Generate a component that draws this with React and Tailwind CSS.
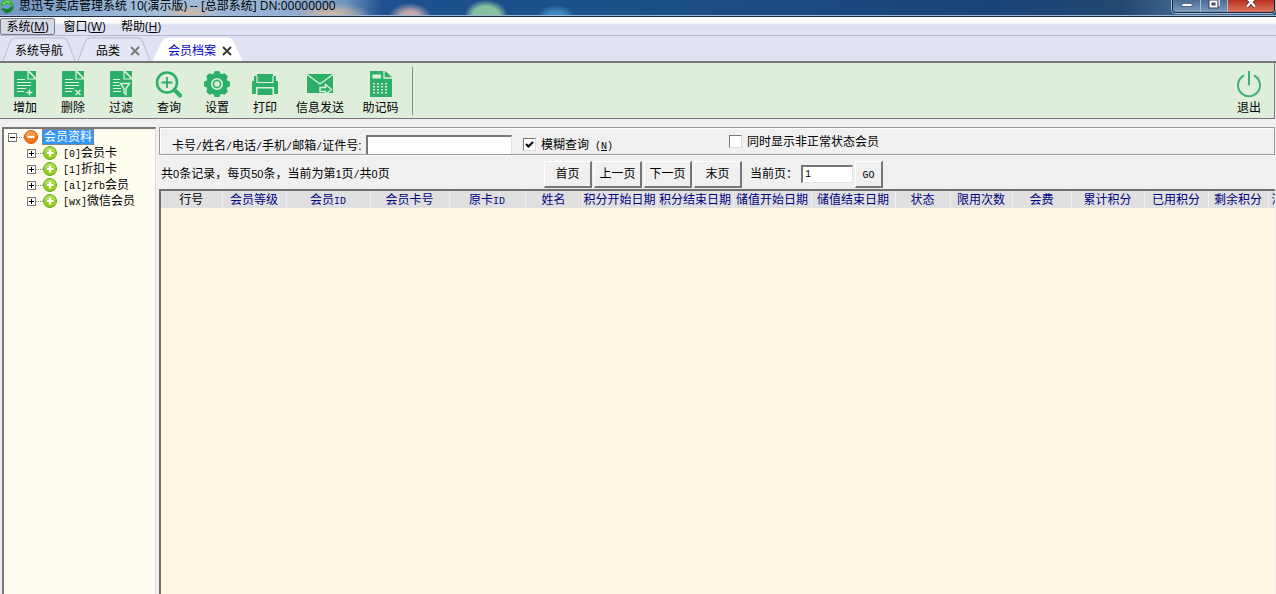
import React from "react";

const ui = "font-['Liberation_Sans','Noto_Sans_CJK_SC',sans-serif]";

function Mono({ children }) {
  return <span className="font-['Liberation_Mono',monospace] text-[10px] leading-none">{children}</span>;
}

function Num({ children }) {
  return <span className="text-[11px] leading-none">{children}</span>;
}

const G = "#2cb069";
const L = "#dff0d8";

function Sheet({ children }) {
  return (
    <svg width="28" height="28" viewBox="0 0 28 28" fill="none" aria-hidden="true">
      <path d="M3 1h14l8 8v18H3z" fill={G} />
      <path d="M18.500 1H25v6.500z" fill={G} />
      <path d="M17 1l8 8M17 1v8h8" stroke={L} strokeWidth="1.200" />
      {children}
    </svg>
  );
}

const icons = {
  add: (
    <Sheet>
      <path d="M6 9.500h8M6 12.500h14M6 15.500h14M6 18.500h9M6 21.500h7" stroke={L} strokeWidth="1.200" />
      <path d="M18.500 19.500v6M15.500 22.500h6" stroke={L} strokeWidth="1.400" />
    </Sheet>
  ),
  remove: (
    <Sheet>
      <path d="M6 9.500h8M6 12.500h14M6 15.500h14M6 18.500h9M6 21.500h7" stroke={L} strokeWidth="1.200" />
      <path d="M16.500 20l5 5M21.500 20l-5 5" stroke={L} strokeWidth="1.400" />
    </Sheet>
  ),
  filter: (
    <Sheet>
      <path d="M6 9.500h7M6 12.500h6M6 15.500h7M6 18.500h8M6 21.500h8" stroke={L} strokeWidth="1.200" />
      <path d="M13.500 13.500h9l-3.500 5v6l-2-1.500v-4.500z" fill={G} stroke={L} strokeWidth="1.400" />
    </Sheet>
  ),
  search: (
    <svg width="28" height="28" viewBox="0 0 28 28" fill="none" stroke={G} aria-hidden="true">
      <circle cx="12" cy="12.500" r="10" strokeWidth="2.600" />
      <path d="M12 7v11M6.500 12.500h11" strokeWidth="1.800" />
      <path d="M19.500 20l5.500 5.500" strokeWidth="4" strokeLinecap="round" />
    </svg>
  ),
  gear: (
    <svg width="28" height="28" viewBox="0 0 28 28" fill={G} aria-hidden="true">
      <circle cx="14" cy="14" r="11" />
      {[0, 45, 90, 135].map((a) => (
        <rect key={a} x="11" y="1" width="6" height="26" rx="1.500" transform={`rotate(${a} 14 14)`} />
      ))}
      <circle cx="14" cy="14" r="5.200" stroke={L} strokeWidth="1.600" />
      <circle cx="14" cy="14" r="2.800" fill={L} />
    </svg>
  ),
  print: (
    <svg width="28" height="28" viewBox="0 0 28 28" fill={G} aria-hidden="true">
      <path d="M6 4h16v7h4a1 1 0 0 1 1 1v12h-4v-6H5v6H1V12a1 1 0 0 1 1-1h4z" />
      <path d="M6.500 18.500h15V25h-15z" />
      <path d="M3 7.500h1.500V13h19V7.500H25" fill="none" stroke={G} strokeWidth="3" />
      <path d="M6 6v6.500h16V6" fill="none" stroke={L} strokeWidth="1.200" />
      <path d="M5.500 24v-6.500h17V24" fill="none" stroke={L} strokeWidth="1.200" />
    </svg>
  ),
  mail: (
    <svg width="28" height="28" viewBox="0 0 28 28" aria-hidden="true">
      <path d="M1 4h26v19H1z" fill={G} />
      <path d="M1 4.500l13 9.500 13-9.500" fill="none" stroke={L} strokeWidth="1.400" />
      <path d="M14 17.500h5.500v-3l6 5-6 5v-3H14z" fill={G} stroke={L} strokeWidth="1.400" />
    </svg>
  ),
  calc: (
    <svg width="28" height="28" viewBox="0 0 28 28" aria-hidden="true">
      <path d="M3 1h15l7 6v20H3z" fill={G} />
      <path d="M5.500 4.500h8.500v4H5.500z" fill={L} />
      <path d="M17 1v7h8" fill="none" stroke={L} strokeWidth="1.300" />
      {[13, 16, 19, 22].map((y) =>
        [6, 10, 14, 18].map((x) => <rect key={`${x}-${y}`} x={x} y={y} width="2" height="1.500" fill={L} />)
      )}
    </svg>
  ),
};

const tools = [
  ["add", "增加", "w-12"],
  ["remove", "删除", "w-12"],
  ["filter", "过滤", "w-12"],
  ["search", "查询", "w-12"],
  ["gear", "设置", "w-12"],
  ["print", "打印", "w-12"],
  ["mail", "信息发送", "w-[62px]"],
  ["calc", "助记码", "w-[59px]"],
];

function Tool({ icon, label, width }) {
  return (
    <button type="button" className={`${width} flex flex-col items-center text-xs leading-4 text-black`}>
      {icon}
      <span className="pt-0.5 whitespace-nowrap">{label}</span>
    </button>
  );
}

function Tab({ label, active, closable, className }) {
  return (
    <button type="button" role="tab" aria-selected={!!active} className={`relative flex h-6 items-center pt-1 ${className}`}>
      <svg className="absolute inset-0 h-full w-full" viewBox="0 0 80 24" preserveAspectRatio="none" aria-hidden="true">
        <path
          d="M0 24L8 5Q10 1 14 1H67Q71 1 72 5L80 24"
          fill={active ? "#fff" : "#e3e6f5"}
          stroke={active ? "#fff" : "#b9bccb"}
          vectorEffect="non-scaling-stroke"
        />
      </svg>
      <span className={`relative ${active ? "text-[#0000c0]" : "text-black"}`}>{label}</span>
      {closable && (
        <svg className="relative" width="10" height="10" viewBox="0 0 10 10" aria-hidden="true">
          <path d="M1 1l8 8M9 1l-8 8" stroke={active ? "#333" : "#777"} strokeWidth="1.800" />
        </svg>
      )}
    </button>
  );
}

function Expander({ open }) {
  return (
    <svg width="9" height="9" viewBox="0 0 9 9" shapeRendering="crispEdges" aria-hidden="true">
      <path d="M.5.5h8v8h-8z" fill="#fff" stroke="#777" />
      <path d={open ? "M2 4.500h5" : "M2 4.500h5M4.500 2v5"} stroke="#000" />
    </svg>
  );
}

function Ball({ minus }) {
  return (
    <svg width="14" height="14" viewBox="0 0 14 14" aria-hidden="true">
      <circle cx="7" cy="7" r="6.500" fill={minus ? "#f07818" : "#8fd01c"} stroke={minus ? "#cf5a10" : "#68ad14"} />
      <path d="M1.500 6a5.500 5 0 0 1 11 0q-5.500 2-11 0" fill="#fff" opacity=".25" />
      <path d={minus ? "M3.500 7h7" : "M3.500 7h7M7 3.500v7"} stroke="#fff" strokeWidth="2.200" />
    </svg>
  );
}

function Check({ label, checked, className }) {
  return (
    <label className={`flex items-center gap-[5px] whitespace-nowrap ${className}`}>
      <span className="grid">
        <input
          type="checkbox"
          defaultChecked={checked}
          className="peer col-start-1 row-start-1 size-[13px] appearance-none border border-t-[#777] border-r-[#ddd] border-b-[#ddd] border-l-[#777] bg-white"
        />
        <svg className="pointer-events-none invisible col-start-1 row-start-1 peer-checked:visible" width="13" height="13" viewBox="0 0 13 13" aria-hidden="true">
          <path d="M3 6l2.500 2.500L10 4" fill="none" stroke="#000" strokeWidth="2.200" />
        </svg>
      </span>
      <span className="pt-px leading-4">{label}</span>
    </label>
  );
}

function Raised({ children, className }) {
  return (
    <button
      type="button"
      className={`h-[27px] border-t border-r-2 border-b-2 border-l border-t-white border-r-[#777] border-b-[#777] border-l-white bg-[#f0f0f0] text-center ${className}`}
    >
      {children}
    </button>
  );
}

const sunken = "border-t-2 border-l-2 border-r border-b border-t-[#777] border-l-[#777] border-r-[#e3e3e3] border-b-[#e3e3e3] bg-white";

const nodes = [
  ["[0]", "会员卡"],
  ["[1]", "折扣卡"],
  ["[al]zfb", "会员"],
  ["[wx]", "微信会员"],
];

const columns = [
  ["行号", 61],
  ["会员等级", 64],
  [<>会员<Mono>ID</Mono></>, 84],
  ["会员卡号", 79],
  [<>原卡<Mono>ID</Mono></>, 76],
  ["姓名", 57],
  ["积分开始日期", 75],
  ["积分结束日期", 76],
  ["储值开始日期", 78],
  ["储值结束日期", 84],
  ["状态", 55],
  ["限用次数", 62],
  ["会费", 59],
  ["累计积分", 73],
  ["已用积分", 64],
  ["剩余积分", 60],
  ["消费次数", 55],
];

export default function App() {
  return (
    <div className={`flex min-h-screen flex-col overflow-hidden bg-[#f0f0f0] text-xs text-black ${ui}`}>
      <header className="flex h-[17px] items-start justify-between border-b border-[#182a48] bg-[linear-gradient(0deg,#9fb6d4_0px,#9fb6d4_1px,transparent_1px),radial-gradient(ellipse_22px_14px_at_410px_17px,#c5a9ad_40%,transparent),radial-gradient(ellipse_22px_16px_at_486px_16px,#86c2a0_60%,transparent),radial-gradient(ellipse_20px_12px_at_556px_17px,#3f8cc6_40%,transparent),radial-gradient(ellipse_40px_14px_at_332px_16px,#d0b8a4_20%,transparent),radial-gradient(ellipse_30px_12px_at_190px_16px,#d0b8a4_20%,transparent),linear-gradient(90deg,#6f97c4_0%,#a4bedb_12%,#94b0d2_22%,#6f95c0_27%,#1d508f_30%,#1b5088_50%,#184478_78%,#244872_88%,#456a92_93%,#345b84_100%)]">
        <div className="flex items-start gap-1">
          <svg width="15" height="14" viewBox="0 0 15 14" aria-hidden="true">
            <path d="M0 5Q4-3 10 0l4 5-3 1Q8 2 4 5L3 7z" fill="#35b53f" />
            <path d="M14 6Q13 13 6 13.500L1 9l3-1q4 3 6-1z" fill="#15802a" />
            <path d="M3 4Q6 0 10 2" fill="none" stroke="#a5e89b" strokeWidth="1" />
          </svg>
          <h1 className="text-xs leading-3 font-normal whitespace-nowrap font-[family-name:'Open_Sans','Noto_Sans_CJK_SC',sans-serif]">
            思迅专卖店管理系统 10(演示版) -- [总部系统] DN:00000000
          </h1>
        </div>
        <div className="mr-px flex h-[13px] overflow-hidden rounded-b border border-t-0 border-[#17273d] shadow-[0_0_0_1px_#a9bed6]">
          <button type="button" aria-label="最小化" className="flex w-7 justify-center border-r border-[#a9bed6] bg-linear-to-b from-[#4a6d94] to-[#7e9bbb]">
            <svg width="14" height="12" viewBox="0 0 14 12" aria-hidden="true">
              <path d="M2 3.500h10v3H2z" fill="#fff" stroke="#46566c" strokeWidth=".8" />
            </svg>
          </button>
          <button type="button" aria-label="还原" className="flex w-[27px] justify-center border-r border-[#a9bed6] bg-linear-to-b from-[#4a6d94] to-[#7e9bbb]">
            <svg width="14" height="12" viewBox="0 0 14 12" fill="none" aria-hidden="true">
              <path d="M5 0h7v6" stroke="#fff" strokeWidth="1.500" />
              <path d="M3.500 1.500h6v5h-6z" stroke="#333f52" strokeWidth="4" />
              <path d="M3.500 1.500h6v5h-6z" stroke="#fff" strokeWidth="2" />
            </svg>
          </button>
          <button type="button" aria-label="关闭" className="flex w-[46px] justify-center bg-linear-to-b from-[#b83020] to-[#d8745c]">
            <svg width="14" height="12" viewBox="0 0 14 12" aria-hidden="true">
              <path d="M3-2l8 8.500M11-2L3 6.500" stroke="#5a2a2a" strokeWidth="4" />
              <path d="M3-2l8 8.500M11-2L3 6.500" stroke="#fff" strokeWidth="2.400" />
            </svg>
          </button>
        </div>
      </header>

      <nav className="flex h-[19px] items-end border-b border-[#b4b9d0] bg-linear-to-b from-white from-30% via-[#d9dded] via-45% to-[#e0e4f4] font-[family-name:'Open_Sans','Noto_Sans_CJK_SC',sans-serif]">
        <button type="button" className="h-[17px] w-[55px] rounded-xs border border-[#777c88] bg-[#d5d9e6] leading-[15px]">
          系统(<u>M</u>)
        </button>
        <button type="button" className="h-[17px] w-[59px] leading-[15px]">窗口(<u>W</u>)</button>
        <button type="button" className="h-[17px] w-[54px] leading-[15px]">帮助(<u>H</u>)</button>
      </nav>

      <div role="tablist" className="flex h-[27px] items-end gap-[3px] border-b-2 border-[#747873] bg-[#dfe2f2] pl-[3px]">
        <Tab label="系统导航" className="w-[72px] justify-center" />
        <Tab label="品类" closable className="w-[72px] justify-end gap-2.5 pr-2.5" />
        <Tab label="会员档案" active closable className="w-[89px] justify-end gap-1.5 pr-2.5" />
      </div>

      <div className="mr-px flex h-14 items-start justify-between border-r border-b border-[#777] bg-[#dfeedb]">
        <div className="flex h-full items-start">
          <div className="flex pt-[7px] pl-px">
            {tools.map(([key, label, width]) => (
              <Tool key={key} icon={icons[key]} label={label} width={width} />
            ))}
          </div>
          <div className="mt-1 ml-0.5 h-12 border-l border-[#888]" />
        </div>
        <div className="pt-[7px]">
          <Tool
            label="退出"
            width="w-[50px]"
            icon={
              <svg width="28" height="28" viewBox="0 0 28 28" fill="none" stroke="#3fb077" strokeWidth="2" aria-hidden="true">
                <path d="M9 5.500a11 11 0 1 0 10 0M14 1v14.500" />
              </svg>
            }
          />
        </div>
      </div>

      <div className="flex flex-1 gap-[3px] pt-2 pl-0.5">
        <aside className="w-[154px] shrink-0 border-t-2 border-r border-l-2 border-t-[#777] border-r-[#ddd] border-l-[#777] bg-[#fffcf0] pl-1 leading-4">
          <div className="flex h-4 items-center">
            <Expander open />
            <span className="w-[7px] border-t border-dotted border-[#888]" />
            <Ball minus />
            <span className="ml-1 h-4 border border-dotted border-[#c67a2a] bg-[#3296f8] px-px leading-[14px] text-white">会员资料</span>
          </div>
          <ul className="pl-[19px]">
            {nodes.map(([code, name]) => (
              <li key={code} className="flex h-4 items-center">
                <Expander />
                <span className="w-[7px] border-t border-dotted border-[#888]" />
                <Ball />
                <span className="ml-1.5 whitespace-nowrap"><Mono>{code}</Mono>{name}</span>
              </li>
            ))}
          </ul>
        </aside>

        <main className="flex min-w-0 flex-1 flex-col">
          <form className="mr-px flex h-7 items-end border border-[#999] pl-3 shadow-[inset_1px_1px_0_#fff,0_1px_0_#fff]">
            <label htmlFor="keyword" className="w-[194px] leading-4 whitespace-nowrap">
              卡号<Mono>/</Mono>姓名<Mono>/</Mono>电话<Mono>/</Mono>手机<Mono>/</Mono>邮箱<Mono>/</Mono>证件号:
            </label>
            <input id="keyword" className={`h-[19px] w-[146px] border-b-0 px-1 ${sunken}`} />
            <Check checked label={<>模糊查询<Mono> (<u>N</u>)</Mono></>} className="ml-[11px] h-5 w-[206px]" />
            <Check label="同时显示非正常状态会员" className="h-5 self-start pt-1.5" />
          </form>

          <div className="flex h-[34px] items-center pt-1">
            <p className="w-[385px] pl-0.5 leading-4 whitespace-nowrap">
              共<Num>0</Num>条记录，每页<Num>50</Num>条，当前为第<Num>1</Num>页<Mono>/</Mono>共<Num>0</Num>页
            </p>
            <div className="flex gap-0.5">
              {["首页", "上一页", "下一页", "末页"].map((t) => (
                <Raised key={t} className="w-12">{t}</Raised>
              ))}
            </div>
            <label htmlFor="page" className="w-[59px] pl-2 whitespace-nowrap">当前页：</label>
            <input id="page" defaultValue="1" className={`h-[18px] w-[52px] pl-0.5 font-['Liberation_Mono',monospace] text-[10px] ${sunken}`} />
            <Raised className="ml-0.5 w-7"><Mono>GO</Mono></Raised>
          </div>

          <div className="mr-px flex-1 overflow-hidden border-t-2 border-l-2 border-[#6f6f6a] bg-[#fdf6e0]">
            <table className="w-0 min-w-full table-fixed border-collapse">
              <colgroup>
                {columns.map(([, w], i) => (
                  <col key={i} style={{ width: w }} />
                ))}
              </colgroup>
              <thead>
                <tr className="h-[17px] bg-[#e0e0e0]">
                  {columns.map(([name], i) => (
                    <th
                      key={i}
                      scope="col"
                      className={`border-r border-[#eee] p-0 leading-4 font-normal whitespace-nowrap ${i === 0 ? "text-black" : "text-[#000080]"}`}
                    >
                      {name}
                    </th>
                  ))}
                </tr>
              </thead>
              <tbody />
            </table>
          </div>
        </main>
      </div>
    </div>
  );
}
